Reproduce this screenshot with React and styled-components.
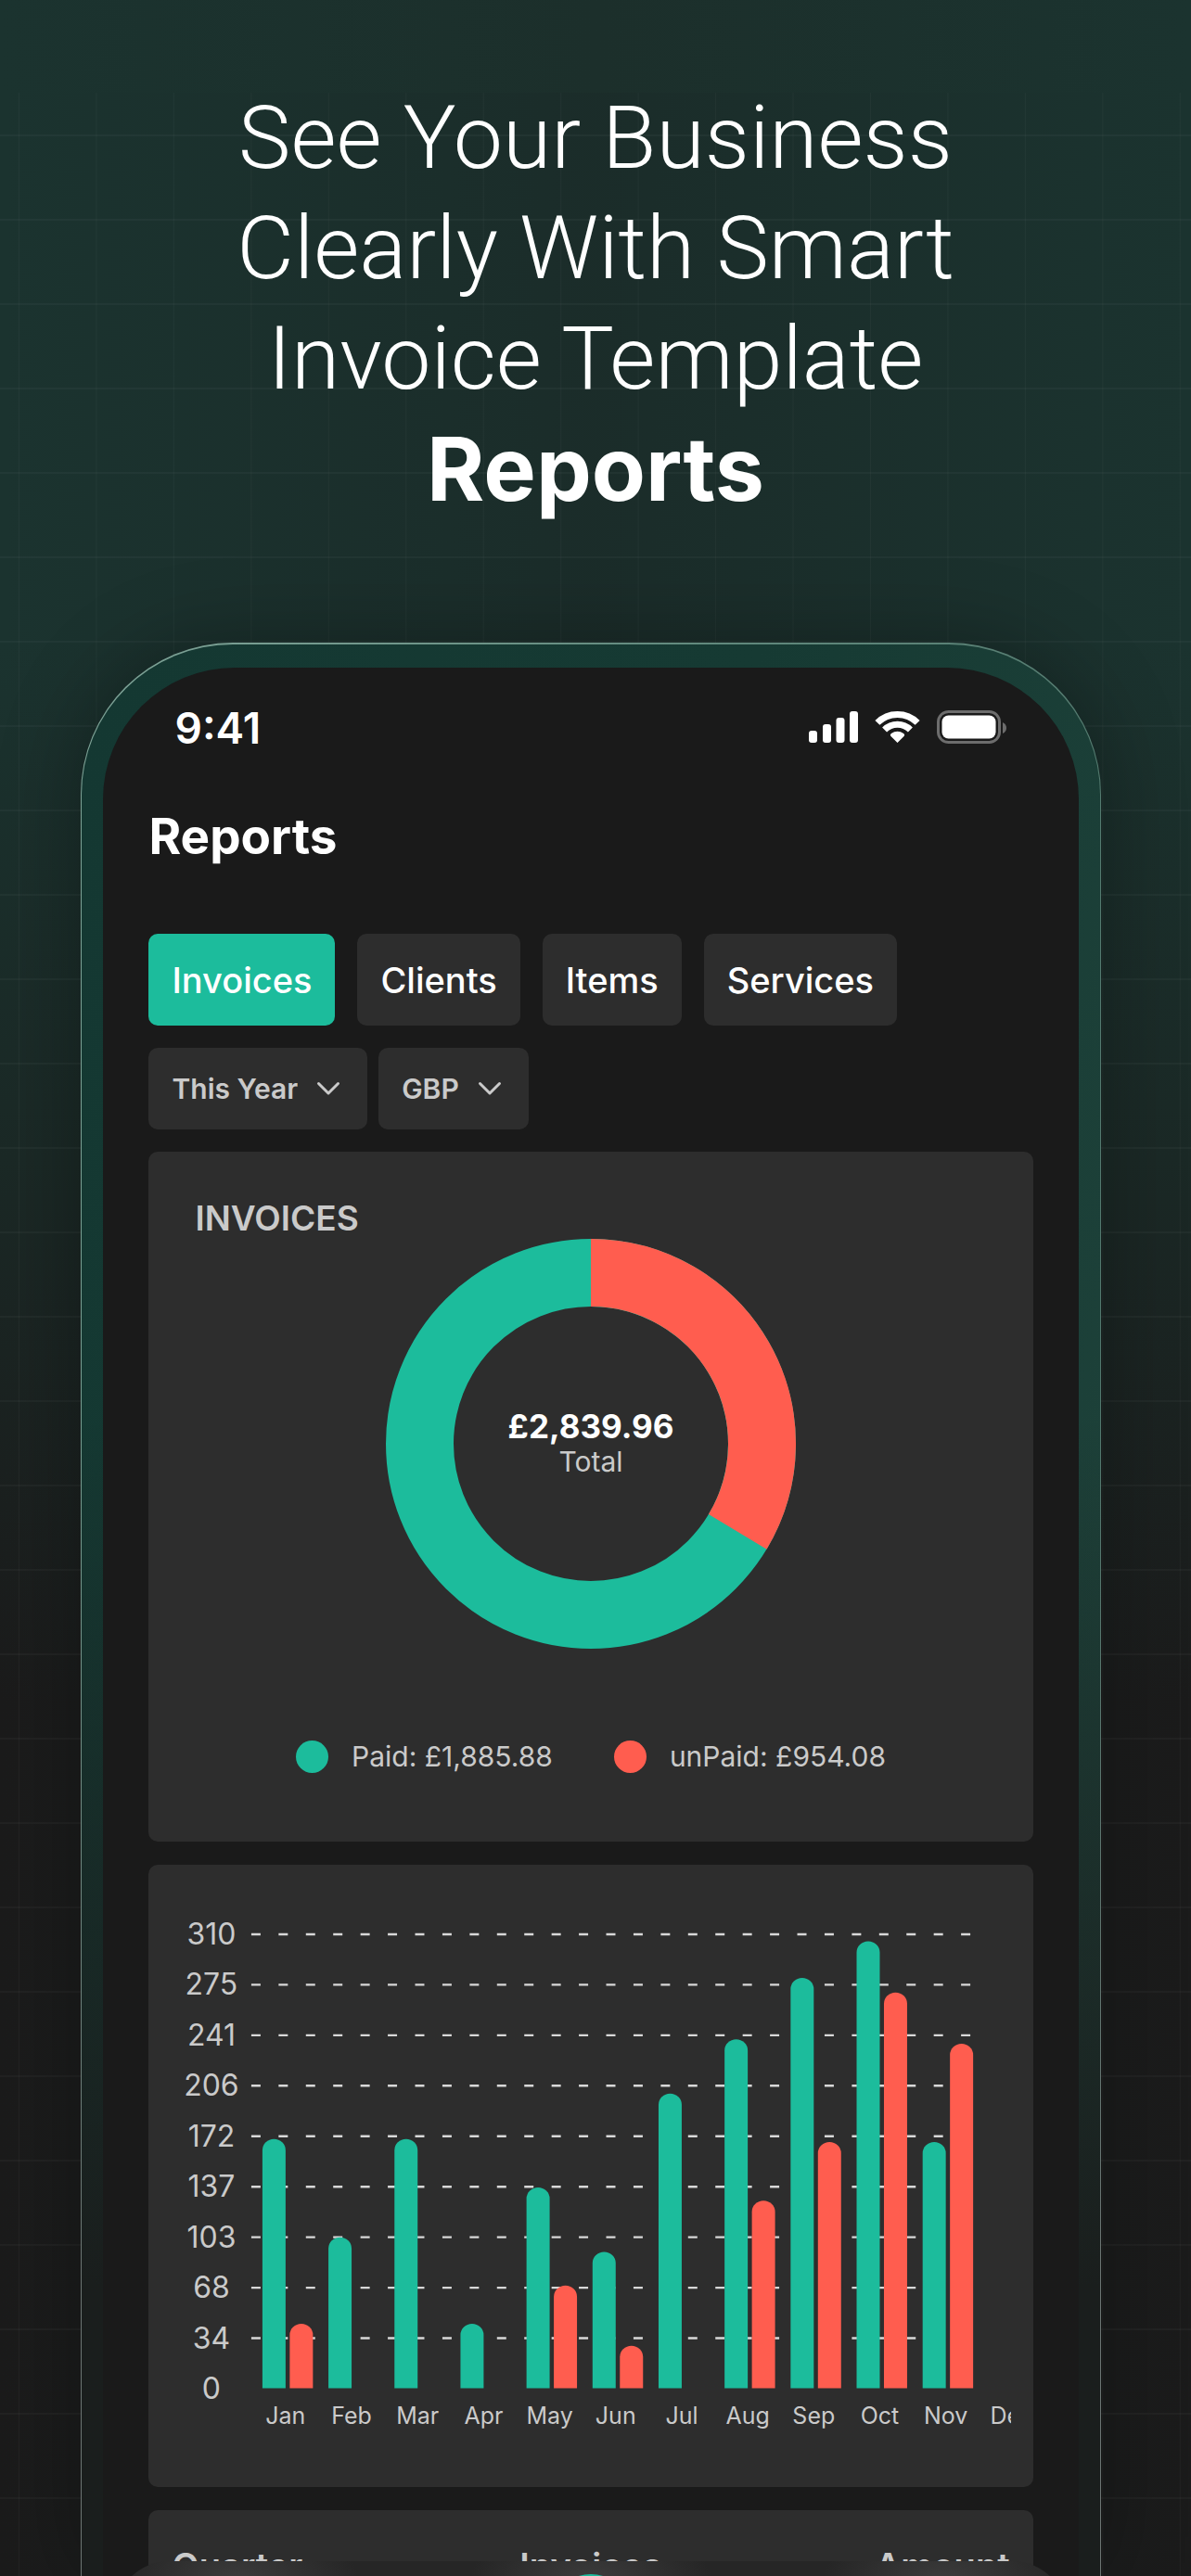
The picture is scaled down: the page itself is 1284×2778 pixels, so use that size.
import React from 'react';
import styled, { createGlobalStyle } from 'styled-components';

const GREEN = '#1cbc9c';
const RED = '#ff5d4f';
const CARD = '#2d2d2d';
const MUTED = '#cacaca';

const TABS = ['Invoices', 'Clients', 'Items', 'Services'];

const MONTHS = [
  { name: 'Jan', paid: 170, unpaid: 44 },
  { name: 'Feb', paid: 103, unpaid: 0 },
  { name: 'Mar', paid: 170, unpaid: 0 },
  { name: 'Apr', paid: 44, unpaid: 0 },
  { name: 'May', paid: 137, unpaid: 70 },
  { name: 'Jun', paid: 93, unpaid: 29 },
  { name: 'Jul', paid: 201, unpaid: 0 },
  { name: 'Aug', paid: 238, unpaid: 128 },
  { name: 'Sep', paid: 280, unpaid: 168 },
  { name: 'Oct', paid: 305, unpaid: 270 },
  { name: 'Nov', paid: 168, unpaid: 235 },
  { name: 'Dec', paid: 0, unpaid: 0 },
];

const TICKS = [310, 275, 241, 206, 172, 137, 103, 68, 34, 0];

const GlobalStyle = createGlobalStyle`
  * {
    box-sizing: border-box;
  }
  body {
    margin: 0;
    background: #1b1b1b;
    color: #fff;
    font-family: Inter, 'Liberation Sans', sans-serif;
  }
`;

const Page = styled.main`
  display: flex;
  flex-direction: column;
  align-items: center;
  height: 100vh;
  overflow: hidden;
  background-image:
    linear-gradient(90deg, #1b332f, #1c2f2b 50%, #1b332f),
    linear-gradient(rgba(255, 255, 255, 0.03) 2px, transparent 2px),
    linear-gradient(90deg, rgba(255, 255, 255, 0.03) 1px, transparent 1px),
    linear-gradient(90deg, transparent, rgba(27, 40, 38, 0.6) 50%, transparent),
    linear-gradient(#1b332f, #1b332f 25%, #1b2926 45%, #1b1b1b 66%);
  background-size: 100% 100px, 100% 91px, 6.5% 100%, 100% 100%, 100% 100%;
  background-position: 0 0, 0 54px, 20px 0, 0 0, 0 0;
  background-repeat: no-repeat, repeat, repeat, repeat, repeat;
`;

const Headline = styled.h1`
  margin: 0;
  padding: 89px 0 128px;
  font-family: Roboto, 'Liberation Sans', sans-serif;
  font-size: 95px;
  font-weight: 300;
  line-height: 119px;
  text-align: center;
  strong {
    display: block;
    font-family: Inter, 'Liberation Sans', sans-serif;
    font-weight: 700;
  }
`;

const Phone = styled.section`
  flex: 1;
  min-height: 0;
  display: flex;
  width: 85.6%;
  padding: 25px 23px 0;
  margin-right: 10px;
  border: solid transparent;
  border-width: 2px 1px 0;
  border-radius: 164px 164px 0 0;
  background:
    linear-gradient(transparent 40%, #1a1e1d 85%) padding-box,
    linear-gradient(100deg, #143832, #163a33 50%, #1f433b) padding-box,
    linear-gradient(transparent 40%, #6c7573 85%) border-box,
    linear-gradient(100deg, #7fa498, #5f877b 50%, #4c7267) border-box;
  box-shadow: 0 0 90px rgba(0, 0, 0, 0.3);
`;

const Screen = styled.div`
  position: relative;
  flex: 1;
  min-width: 0;
  overflow: hidden;
  padding: 0 49px;
  border-radius: 142px 142px 0 0;
  background: #1a1a1a;
`;

const StatusBar = styled.div`
  display: flex;
  align-items: center;
  justify-content: space-between;
  height: 130px;
  padding: 0 28px;
  font-size: 46px;
  font-weight: 600;
`;

const StatusIconsSvg = styled.svg`
  width: 214px;
  height: 44px;
`;

const Title = styled.h2`
  margin: 0 0 53px;
  font-size: 53px;
  font-weight: 700;
  line-height: 104px;
`;

const Tabs = styled.nav`
  display: flex;
  gap: 24px;
  margin-bottom: 24px;
`;

const Tab = styled.button`
  height: 99px;
  padding: 0 25px;
  border: 0;
  border-radius: 10px;
  background: ${(props) => (props.$active ? GREEN : CARD)};
  color: #fff;
  font: 500 38px Inter, sans-serif;
`;

const Filters = styled.div`
  display: flex;
  gap: 12px;
  margin-bottom: 24px;
`;

const Filter = styled.label`
  display: flex;
  align-items: center;
  gap: 20px;
  height: 88px;
  padding: 0 29px 0 25px;
  border-radius: 10px;
  background: ${CARD};
  color: ${MUTED};
`;

const FilterSelect = styled.select`
  appearance: none;
  field-sizing: content;
  padding: 0;
  border: 0;
  background: transparent;
  color: inherit;
  font: 600 30px Inter, sans-serif;
`;

const Card = styled.section`
  margin-bottom: 25px;
  border-radius: 10px;
  background: ${CARD};
  color: ${MUTED};
`;

const InvoiceCard = styled(Card)`
  display: flex;
  flex-direction: column;
  height: 744px;
  padding: 50px;
`;

const CardTitle = styled.h3`
  margin: 0;
  font-size: 37px;
  font-weight: 600;
  line-height: 44px;
`;

const Donut = styled.div`
  display: grid;
  place-items: center;
  align-self: center;
  > * {
    grid-area: 1 / 1;
  }
`;

const DonutLabel = styled.div`
  text-align: center;
  font-size: 30px;
  line-height: 38px;
  strong {
    display: block;
    color: #fff;
    font-size: 35px;
    font-weight: 700;
  }
`;

const Legend = styled.div`
  display: flex;
  justify-content: center;
  gap: 66px;
  margin-top: 96px;
`;

const LegendItem = styled.div`
  display: flex;
  align-items: center;
  gap: 25px;
  font-size: 30px;
  line-height: 40px;
  &::before {
    content: '';
    width: 35px;
    height: 35px;
    border-radius: 50%;
    background: ${(props) => props.$color};
  }
`;

const ChartCard = styled(Card)`
  height: 671px;
  padding: 49px 24px;
  svg {
    display: block;
    width: 100%;
  }
`;

const ChartLabel = styled.text`
  fill: ${MUTED};
  font-size: ${(props) => props.$size}px;
  text-anchor: middle;
`;

const TableCard = styled(Card)`
  padding: 24px 25px;
`;

const Table = styled.table`
  width: 100%;
  border-spacing: 0;
  table-layout: fixed;
  th {
    height: 72px;
    padding: 0;
    font-size: 38px;
    font-weight: 600;
    text-align: center;
  }
  th:first-child {
    text-align: left;
  }
  th:last-child {
    text-align: right;
  }
`;

// Floating bar over the scrolled report, only its top edge is on screen
const BottomBar = styled.nav`
  position: absolute;
  right: 12px;
  bottom: -104px;
  left: 12px;
  display: flex;
  justify-content: center;
  height: 120px;
  border-radius: 60px;
  background:
    radial-gradient(ellipse 130px 60px at 13% 20px, #3c3c3c, transparent),
    radial-gradient(ellipse 130px 60px at 50% 20px, #3c3c3c, transparent),
    radial-gradient(ellipse 130px 60px at 87% 20px, #3c3c3c, transparent),
    #262626;
`;

const AddButton = styled.button`
  width: 88px;
  height: 88px;
  margin-top: 14px;
  padding: 0;
  border: 0;
  border-radius: 50%;
  background: ${GREEN};
`;

function StatusIcons() {
  return (
    <StatusIconsSvg viewBox="0 0 214 44" fill="#fff" aria-hidden="true">
      <rect x="0" y="25" width="9" height="13" rx="3" />
      <rect x="15" y="18" width="9" height="20" rx="3" />
      <rect x="29.5" y="11" width="9" height="27" rx="3" />
      <rect x="44" y="4" width="9" height="34" rx="3" />
      <g fill="none" stroke="#fff" strokeWidth="7">
        <path d="M73.9 16.4a30.5 30.5 0 0 1 43.2 0" />
        <path d="M81.6 24.1a19.7 19.7 0 0 1 27.8 0" />
      </g>
      <path d="M95.5 38 88.2 30.7q-1-1.6.6-2.6a11.7 11.7 0 0 1 13.4 0q1.6 1 .6 2.6z" />
      <rect
        x="139.5" y="4.5" width="66" height="33" rx="11"
        fill="none" stroke="#6d6d6d" strokeWidth="3"
      />
      <rect x="143.5" y="8.5" width="58" height="25" rx="7" />
      <path d="M209 16q4 2 4 6t-4 6z" fill="#6d6d6d" />
    </StatusIconsSvg>
  );
}

function Chevron() {
  return (
    <svg width="26" height="16" viewBox="0 0 26 16" aria-hidden="true">
      <path
        d="M2.5 2.5 13 13 23.5 2.5" fill="none" stroke="currentColor"
        strokeWidth="3" strokeLinecap="round" strokeLinejoin="round"
      />
    </svg>
  );
}

function DonutChart({ share }) {
  const angle = share * 2 * Math.PI;
  const radius = 184.5;
  const x = 221 + radius * Math.sin(angle);
  const y = 221 - radius * Math.cos(angle);
  return (
    <svg width="442" height="442" viewBox="0 0 442 442" aria-hidden="true">
      <circle cx="221" cy="221" r={radius} fill="none" stroke={GREEN} strokeWidth="73" />
      <path
        d={`M221 36.5A${radius} ${radius} 0 0 1 ${x} ${y}`}
        fill="none" stroke={RED} strokeWidth="73"
      />
    </svg>
  );
}

function Bar({ x, value, color }) {
  if (!value) {
    return null;
  }
  const top = 516 - value * 1.582;
  return (
    <path
      d={`M${x} 516V${top + 12}a12.5 12 0 0 1 25 0V516z`}
      fill={color}
    />
  );
}

function BarChart() {
  return (
    <svg viewBox="0 0 906 571" role="img" aria-label="Invoices by month">
      {TICKS.map((tick, index) => {
        const y = 26 + index * 54.5;
        return (
          <g key={tick}>
            <ChartLabel x="44" y={y + 11} $size={32}>{tick}</ChartLabel>
            {tick > 0 && (
              <line
                x1="87" x2="864" y1={y} y2={y} stroke="#d8d8d8"
                strokeWidth="2.4" strokeDasharray="10 19.46"
              />
            )}
          </g>
        );
      })}
      {MONTHS.map((month, index) => {
        const x = 99 + index * 71.25;
        return (
          <g key={month.name}>
            <Bar x={x} value={month.paid} color={GREEN} />
            <Bar x={x + 29.5} value={month.unpaid} color={RED} />
            <ChartLabel x={x + 25} y="555" $size={25}>{month.name}</ChartLabel>
          </g>
        );
      })}
    </svg>
  );
}

export default function App() {
  return (
    <Page>
      <GlobalStyle />
      <Headline>
        See Your Business
        <br />
        Clearly With Smart
        <br />
        Invoice Template
        <strong>Reports</strong>
      </Headline>
      <Phone>
        <Screen>
          <StatusBar>
            <span>9:41</span>
            <StatusIcons />
          </StatusBar>
          <Title>Reports</Title>
          <Tabs>
            {TABS.map((tab, index) => (
              <Tab key={tab} $active={index === 0}>{tab}</Tab>
            ))}
          </Tabs>
          <Filters>
            <Filter>
              <FilterSelect aria-label="Period">
                <option>This Year</option>
              </FilterSelect>
              <Chevron />
            </Filter>
            <Filter>
              <FilterSelect aria-label="Currency">
                <option>GBP</option>
              </FilterSelect>
              <Chevron />
            </Filter>
          </Filters>
          <InvoiceCard>
            <CardTitle>INVOICES</CardTitle>
            <Donut>
              <DonutChart share={954.08 / 2839.96} />
              <DonutLabel>
                <strong>£2,839.96</strong>
                Total
              </DonutLabel>
            </Donut>
            <Legend>
              <LegendItem $color={GREEN}>Paid: £1,885.88</LegendItem>
              <LegendItem $color={RED}>unPaid: £954.08</LegendItem>
            </Legend>
          </InvoiceCard>
          <ChartCard>
            <BarChart />
          </ChartCard>
          <TableCard>
            <Table>
              <thead>
                <tr>
                  <th>Quarter</th>
                  <th>Invoices</th>
                  <th>Amount</th>
                </tr>
              </thead>
            </Table>
          </TableCard>
          <BottomBar>
            <AddButton aria-label="Add" />
          </BottomBar>
        </Screen>
      </Phone>
    </Page>
  );
}
